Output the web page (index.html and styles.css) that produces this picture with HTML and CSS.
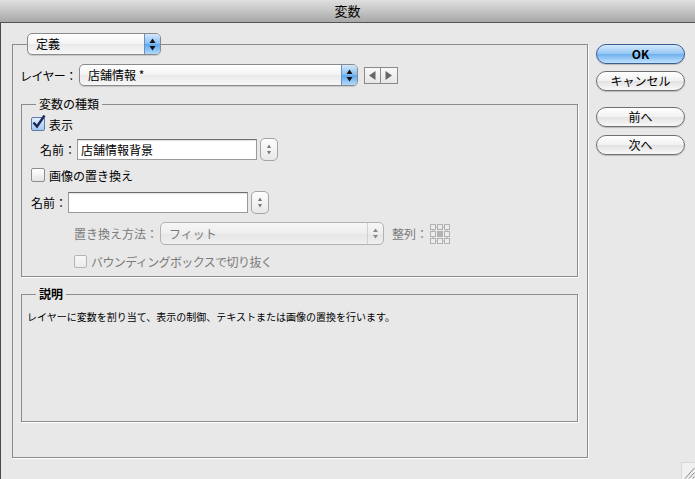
FILE: index.html
```html
<!DOCTYPE html>
<html lang="ja">
<head>
    <meta charset="UTF-8">
    <title>変数</title>
    <link rel="stylesheet" href="styles.css">
</head>
<body>
    <div class="titlebar">変数</div>

    <div class="window">
        <fieldset class="panel">
            <legend>
                <div class="popup popup-def">
                    <span class="popup-label">定義</span>
                    <span class="popup-arrows">
                        <svg width="15" height="20" viewBox="0 0 15 20"><polygon points="4.5,9 10.5,9 7.5,4.5" fill="#111"/><polygon points="4.5,12 10.5,12 7.5,16.5" fill="#111"/></svg>
                    </span>
                </div>
            </legend>

            <div class="layer-row">
                <span class="layer-label">レイヤー：</span>
                <div class="popup popup-layer">
                    <span class="popup-label">店舗情報 *</span>
                    <span class="popup-arrows">
                        <svg width="15" height="20" viewBox="0 0 15 20"><polygon points="4.5,9 10.5,9 7.5,4.5" fill="#111"/><polygon points="4.5,12 10.5,12 7.5,16.5" fill="#111"/></svg>
                    </span>
                </div>
                <div class="nav">
                    <span class="nav-btn"><svg width="15" height="15" viewBox="0 0 15 15"><polygon points="10.5,3 10.5,12 4,7.5" fill="#666"/></svg></span>
                    <span class="nav-btn"><svg width="15" height="15" viewBox="0 0 15 15"><polygon points="4.5,3 4.5,12 11,7.5" fill="#666"/></svg></span>
                </div>
            </div>

            <fieldset class="group group-var">
                <legend>変数の種類</legend>

                <div class="row row-check r1">
                    <span class="check checked">
                        <svg width="16" height="16" viewBox="0 0 16 16"><path d="M2.5 7.5 L6 11.5 L13.5 0.5" fill="none" stroke="#18285a" stroke-width="2.4"/></svg>
                    </span>
                    <span>表示</span>
                </div>

                <div class="row row-field r2">
                    <span class="name-label">名前：</span>
                    <div class="field">店舗情報背景</div>
                    <span class="stepper">
                        <svg width="16" height="21" viewBox="0 0 16 21"><polygon points="6,9 10,9 8,5.5" fill="#777"/><polygon points="6,12 10,12 8,15.5" fill="#777"/></svg>
                    </span>
                </div>

                <div class="row row-check r3">
                    <span class="check"></span>
                    <span>画像の置き換え</span>
                </div>

                <div class="row row-field r4">
                    <span class="name-label">名前：</span>
                    <div class="field"></div>
                    <span class="stepper">
                        <svg width="16" height="21" viewBox="0 0 16 21"><polygon points="6,9 10,9 8,5.5" fill="#777"/><polygon points="6,12 10,12 8,15.5" fill="#777"/></svg>
                    </span>
                </div>

                <div class="row row-field r5 disabled">
                    <span class="method-label">置き換え方法：</span>
                    <div class="popup popup-method">
                        <span class="popup-label">フィット</span>
                        <span class="popup-arrows">
                            <svg width="15" height="21" viewBox="0 0 15 21"><polygon points="5,9 10,9 7.5,5.5" fill="#888"/><polygon points="5,12 10,12 7.5,15.5" fill="#888"/></svg>
                        </span>
                    </div>
                    <span class="align-label">整列：</span>
                    <svg class="align-grid" width="20" height="20" viewBox="0 0 20 20">
                        <g fill="#ececec" stroke="#b2b2b2" stroke-width="1">
                            <rect x="0.5" y="0.5" width="5" height="5"/><rect x="7.5" y="0.5" width="5" height="5"/><rect x="14.5" y="0.5" width="5" height="5"/>
                            <rect x="0.5" y="7.5" width="5" height="5"/><rect x="14.5" y="7.5" width="5" height="5"/>
                            <rect x="0.5" y="14.5" width="5" height="5"/><rect x="7.5" y="14.5" width="5" height="5"/><rect x="14.5" y="14.5" width="5" height="5"/>
                        </g>
                        <rect x="7.5" y="7.5" width="5" height="5" fill="#b2b2b2" stroke="#b2b2b2"/>
                        <g stroke="#b2b2b2" stroke-width="1">
                            <path d="M6 3 H7 M13 3 H14 M6 17 H7 M13 17 H14 M3 6 V7 M3 13 V14 M17 6 V7 M17 13 V14"/>
                        </g>
                    </svg>
                </div>

                <div class="row row-check r6 disabled">
                    <span class="check check-small"></span>
                    <span class="bbox-label">バウンディングボックスで切り抜く</span>
                </div>
            </fieldset>

            <fieldset class="group group-desc">
                <legend>説明</legend>
                <p class="desc-text">レイヤーに変数を割り当て、表示の制御、テキストまたは画像の置換を行います。</p>
            </fieldset>
        </fieldset>

        <div class="buttons">
            <div class="btn btn-ok">OK</div>
            <div class="btn btn-cancel">キャンセル</div>
            <div class="btn btn-prev">前へ</div>
            <div class="btn">次へ</div>
        </div>

        <div class="grip">
            <svg width="13" height="16" viewBox="0 0 13 16"><path d="M3 15.5 L12.5 5 M7 15.5 L12.5 9.5 M10.5 15.5 L12.5 13.5" stroke="#888" stroke-width="1" fill="none"/></svg>
        </div>
    </div>
</body>
</html>
```

FILE: styles.css
```css
body {
    margin: 0;
    font-family: "Noto Sans CJK JP", "Noto Sans", sans-serif;
    font-size: 12px;
    color: #000;
    background-color: #e8e8e8;
    height: 100vh;
    overflow: hidden;
}
.titlebar {
    height: 22px;
    line-height: 22px;
    text-align: center;
    font-size: 13px;
    background: linear-gradient(#e0e0e0, #a8a8a8);
    border-bottom: 1px solid #555;
}
.window {
    position: relative;
    display: flex;
    align-items: flex-start;
    height: 456px;
    box-sizing: border-box;
    padding: 10px 0 0 11px;
    border-left: 1px solid #4a4a4a;
}

/* group boxes */
fieldset {
    margin: 0;
    padding: 0;
    min-width: 0;
    border: 1px solid #8c8c8c;
    box-shadow: 1px 1px 0 #fff;
}
legend {
    line-height: 14px;
    padding: 0 3px;
    margin-left: 14px;
}
.panel {
    width: 576px;
    box-sizing: border-box;
    padding-bottom: 35px;
}
.panel > legend {
    padding: 0;
    margin-left: 14px;
}
.group {
    margin: 11px 9px 0 8px;
}
.group-var {
    padding-bottom: 6px;
}
.group-desc {
    margin-top: 10px;
}
.group-desc > legend {
    font-weight: bold;
}
.desc-text {
    margin: 0;
    height: 120px;
    box-sizing: border-box;
    padding: 9px 0 0 5px;
    font-size: 10px;
    line-height: 14px;
}

/* popup menus */
.popup {
    display: flex;
    height: 22px;
    box-sizing: border-box;
    border: 1px solid #8a8a8a;
    border-radius: 5px;
    overflow: hidden;
    background: linear-gradient(#ffffff, #f3f3f3 50%, #e9e9e9 51%, #f7f7f7);
    box-shadow: 0 1px 1px rgba(0, 0, 0, 0.15);
}
.popup-label {
    flex: 1;
    padding-left: 8px;
    line-height: 20px;
}
.popup-arrows {
    width: 15px;
    display: flex;
    align-items: center;
    background: linear-gradient(#d4e8fc, #86bdf2 50%, #5fa6ec 51%, #b1d9fc);
    border-left: 1px solid #6c8fbf;
}
.popup-def {
    width: 134px;
}
.popup-layer {
    width: 279px;
}

.layer-row {
    display: flex;
    align-items: center;
    height: 22px;
    margin: 9px 0 0 7px;
}
.layer-label {
    width: 59px;
    flex-shrink: 0;
    white-space: nowrap;
    letter-spacing: -0.6px;
}
.nav {
    display: flex;
    margin-left: 6px;
}
.nav-btn {
    width: 17px;
    height: 17px;
    box-sizing: border-box;
    border: 1px solid #8a8a8a;
    background: linear-gradient(#f8f8f8, #e6e6e6);
}
.nav-btn + .nav-btn {
    border-left: none;
}

/* rows in 変数の種類 */
.row {
    display: flex;
    align-items: center;
    padding-left: 9px;
}
.row-check {
    height: 18px;
}
.row-field {
    height: 23px;
}
.r1 { margin-top: 4px; }
.r2 { margin-top: 5px; padding-left: 18px; }
.r3 { margin-top: 5px; }
.r4 { margin-top: 7px; }
.r5 { margin-top: 8px; padding-left: 52px; }
.r6 { margin-top: 7px; padding-left: 52px; }

.check {
    position: relative;
    width: 14px;
    height: 14px;
    box-sizing: border-box;
    margin-right: 4px;
    border: 1px solid #8c8c8c;
    border-radius: 2px;
    background: linear-gradient(#ffffff, #e4e4e4);
}
.check svg {
    position: absolute;
    left: -1px;
    top: -3px;
}
.check.checked {
    border-color: #5d79a8;
    background: linear-gradient(#e2eefc, #a4c8ef);
}
.check-small {
    width: 13px;
    height: 13px;
}
.disabled {
    color: #7a7a7a;
}
.disabled .check {
    border-color: #b4b4b4;
    background: linear-gradient(#f8f8f8, #ececec);
}
.bbox-label {
    letter-spacing: -0.6px;
}

.name-label {
    width: 36px;
    margin-right: 1px;
}
.field {
    width: 180px;
    height: 21px;
    box-sizing: border-box;
    border: 1px solid #9a9a9a;
    border-top-color: #6e6e6e;
    background: #fff;
    box-shadow: inset 0 1px 1px rgba(0, 0, 0, 0.12);
    padding-left: 3px;
    line-height: 19px;
}
.stepper {
    width: 18px;
    height: 23px;
    box-sizing: border-box;
    margin-left: 3px;
    border: 1px solid #a4a4a4;
    border-radius: 5px;
    background: linear-gradient(#fdfdfd, #e8e8e8);
}

.method-label {
    width: 86px;
}
.popup-method {
    width: 224px;
    height: 23px;
    border-color: #b2b2b2;
    background: linear-gradient(#f6f6f6, #eeeeee 50%, #e6e6e6 51%, #efefef);
    box-shadow: none;
}
.popup-method .popup-label {
    line-height: 21px;
}
.popup-method .popup-arrows {
    background: none;
    border-left: 1px solid #d0d0d0;
}
.align-label {
    margin-left: 8px;
    width: 38px;
}

/* right buttons */
.buttons {
    display: flex;
    flex-direction: column;
    margin-left: 8px;
    padding-top: 11px;
}
.btn {
    width: 89px;
    height: 20px;
    box-sizing: border-box;
    border: 1px solid #707070;
    border-radius: 10px;
    text-align: center;
    line-height: 18px;
    background: linear-gradient(#ffffff, #f1f1f1 50%, #e2e2e2 51%, #f8f8f8);
    box-shadow: 0 1px 1px rgba(0, 0, 0, 0.2);
}
.btn-ok {
    margin-bottom: 7px;
    border-color: #3b5c92;
    background: linear-gradient(#d3e9fc, #93c6f3 50%, #6eb0ef 51%, #bfe3fd);
    font-weight: bold;
}
.btn-cancel {
    margin-bottom: 16px;
}
.btn-prev {
    margin-bottom: 8px;
}

.grip {
    position: absolute;
    right: 0;
    bottom: 0;
    width: 13px;
    height: 16px;
    background: #f0f0f0;
    border-left: 1px solid #d8d8d8;
    border-top: 1px solid #d8d8d8;
}
```
